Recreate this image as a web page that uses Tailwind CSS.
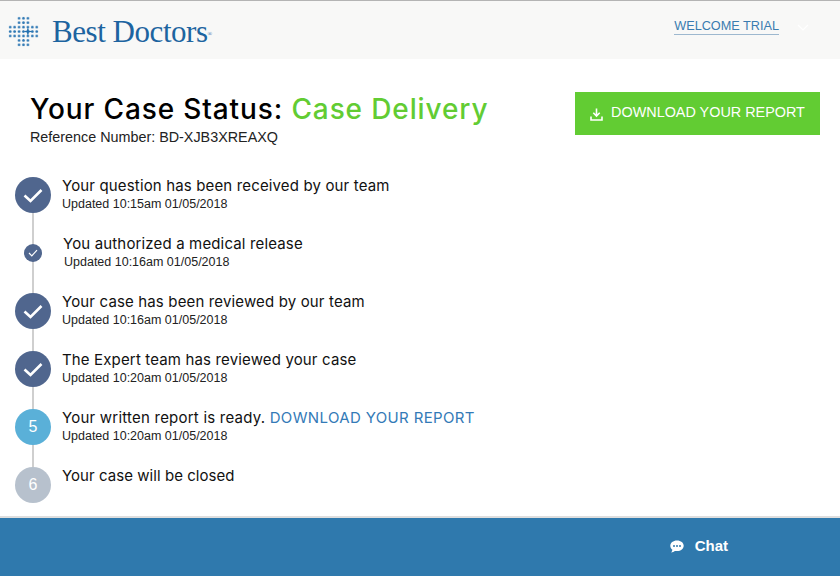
<!DOCTYPE html>
<html>
<head>
<meta charset="utf-8">
<script src="https://cdn.jsdelivr.net/npm/@tailwindcss/browser@4"></script>
</head>
<body class="w-[840px] h-[576px] overflow-hidden bg-white font-['Liberation_Sans',sans-serif] flex flex-col">
<header class="h-[59px] shrink-0 border-t border-[#b4b4b4] bg-[#f8f8f7] flex items-center justify-between">
  <div class="flex items-center pl-2">
    <svg width="31" height="31" viewBox="0 0 31 31" class="mt-[2px]">
      <defs><pattern id="d" width="4.43" height="4.43" patternUnits="userSpaceOnUse" x="0" y="0"><circle cx="2.2" cy="2.2" r="1.35" fill="#2f78b4"/></pattern></defs>
      <polygon points="8.86,0 22.14,0 22.14,8.86 31,8.86 31,22.14 22.14,22.14 22.14,31 8.86,31 8.86,22.14 0,22.14 0,8.86 8.86,8.86" fill="url(#d)"/>
      <circle cx="19.9" cy="15.5" r="3.2" fill="#f8f8f7"/>
      <path d="M19.9 10.5 L20.9 14.5 L24.900 15.5 L20.9 16.5 L19.9 20.500 L18.9 16.5 L14.900 15.5 L18.900 14.5 Z" fill="#2471b0"/>
    </svg>
    <span class="ml-[13px] mt-[2px] font-['Liberation_Serif',serif] text-[31px] leading-none tracking-[-0.45px] text-[#1d64a0]">Best Doctors<span class="text-[6px] align-[6px] leading-none">®</span></span>
  </div>
  <div class="flex items-center pr-[31px] mb-[7px]">
    <a class="text-[12.7px] leading-[15px] text-[#3a7cb0] border-b border-[#9db8cf]">WELCOME TRIAL</a>
    <svg width="12" height="8" viewBox="0 0 12 8" class="ml-[18px] mt-[3px]" fill="none" stroke="#fff" stroke-width="1.2"><path d="M1 1l5 5 5-5"/></svg>
  </div>
</header>
<main class="flex-1 min-h-0">
  <div class="flex justify-between pl-[30px] pr-5 pt-[33px]">
    <div>
      <h1 class="font-['Inter',sans-serif] font-medium text-[28px] leading-[34px] tracking-[0.88px] text-black">Your Case Status: <span class="text-[#62cc33]">Case Delivery</span></h1>
      <p class="text-[14.35px] leading-[20px] mt-[1px] text-[#222]">Reference Number: BD-XJB3XREAXQ</p>
    </div>
    <button class="w-[245px] h-[43px] bg-[#62cc33] text-white text-[14.4px] flex items-center justify-center gap-[8px] pb-[1px]">
      <svg width="13" height="13" viewBox="0 0 13 13" fill="none" stroke="#fff" stroke-width="1.6" class="mt-[2px]"><path d="M6.5 0.5v7M3.3 4.8l3.2 3.2 3.2-3.2"/><path d="M1 8.5v3.5h11V8.5"/></svg>
      DOWNLOAD YOUR REPORT
    </button>
  </div>
  <ol class="relative mt-[30px] pl-[15px] font-['Inter',sans-serif]">
    <div class="absolute left-[32px] top-[18px] w-[2px] h-[290px] bg-[#cfcfcf]"></div>
    <li class="relative h-[58px] flex items-start gap-[11px]">
      <div class="w-9 h-9 shrink-0 rounded-full bg-[#50668e] flex items-center justify-center"><svg width="20" height="15" viewBox="0 0 20 15" fill="none" stroke="#fff" stroke-width="2.6"><path d="M1.5 7.5l6 5.5L18.5 2"/></svg></div>
      <div><p class="text-[15px] leading-[18px] tracking-[0.15px] text-[#111]">Your question has been received by our team</p><p class="font-['Liberation_Sans',sans-serif] text-[12.5px] leading-[18px] text-[#222]">Updated 10:15am 01/05/2018</p></div>
    </li>
    <li class="relative h-[58px] flex items-start pl-[9px] gap-[21px]">
      <div class="w-[18px] h-[18px] shrink-0 mt-[9px] rounded-full bg-[#50668e] flex items-center justify-center"><svg width="10" height="8" viewBox="0 0 10 8" fill="none" stroke="#fff" stroke-width="1.2"><path d="M1 4l2.8 2.8L9 1.2"/></svg></div>
      <div><p class="text-[15px] leading-[18px] tracking-[0.15px] text-[#111]">You authorized a medical release</p><p class="font-['Liberation_Sans',sans-serif] text-[12.5px] leading-[18px] text-[#222] pl-[1px]">Updated 10:16am 01/05/2018</p></div>
    </li>
    <li class="relative h-[58px] flex items-start gap-[11px]">
      <div class="w-9 h-9 shrink-0 rounded-full bg-[#50668e] flex items-center justify-center"><svg width="20" height="15" viewBox="0 0 20 15" fill="none" stroke="#fff" stroke-width="2.6"><path d="M1.5 7.5l6 5.5L18.5 2"/></svg></div>
      <div><p class="text-[15px] leading-[18px] tracking-[0.15px] text-[#111]">Your case has been reviewed by our team</p><p class="font-['Liberation_Sans',sans-serif] text-[12.5px] leading-[18px] text-[#222]">Updated 10:16am 01/05/2018</p></div>
    </li>
    <li class="relative h-[58px] flex items-start gap-[11px]">
      <div class="w-9 h-9 shrink-0 rounded-full bg-[#50668e] flex items-center justify-center"><svg width="20" height="15" viewBox="0 0 20 15" fill="none" stroke="#fff" stroke-width="2.6"><path d="M1.5 7.5l6 5.5L18.5 2"/></svg></div>
      <div><p class="text-[15px] leading-[18px] tracking-[0.15px] text-[#111]">The Expert team has reviewed your case</p><p class="font-['Liberation_Sans',sans-serif] text-[12.5px] leading-[18px] text-[#222]">Updated 10:20am 01/05/2018</p></div>
    </li>
    <li class="relative h-[58px] flex items-start gap-[11px]">
      <div class="w-9 h-9 shrink-0 rounded-full bg-[#5ab0d8] flex items-center justify-center font-['Liberation_Sans',sans-serif] text-white text-[16px]">5</div>
      <div><p class="text-[15px] leading-[18px] tracking-[0.22px] text-[#111]">Your written report is ready. <a class="text-[#337ab7] tracking-[0.36px]">DOWNLOAD YOUR REPORT</a></p><p class="font-['Liberation_Sans',sans-serif] text-[12.5px] leading-[18px] text-[#222]">Updated 10:20am 01/05/2018</p></div>
    </li>
    <li class="relative h-[58px] flex items-start gap-[11px]">
      <div class="w-9 h-9 shrink-0 rounded-full bg-[#b7c1cd] flex items-center justify-center font-['Liberation_Sans',sans-serif] text-white text-[16px]">6</div>
      <div><p class="text-[15px] leading-[18px] tracking-[0.05px] text-[#111]">Your case will be closed</p></div>
    </li>
  </ol>
</main>
<footer class="h-[60px] shrink-0 border-t-2 border-[#dedede] bg-[#2f79ad] flex items-center justify-end pr-[112px] pb-[2px] gap-[11px] text-white">
  <svg width="14" height="13" viewBox="0 0 14 13"><path d="M7 0.5C3.1 0.5 0.3 2.8 0.3 5.8c0 1.6.8 3 2.1 4-.1 1-.6 1.9-1.3 2.6 1.500-.1 2.8-.7 3.8-1.5.7.1 1.4.2 2.1.2 3.9 0 6.7-2.3 6.7-5.3S10.900.5 7 .5z" fill="#fff"/><circle cx="4" cy="5.900" r="1" fill="#2f79ad"/><circle cx="7" cy="5.900" r="1" fill="#2f79ad"/><circle cx="10" cy="5.900" r="1" fill="#2f79ad"/></svg>
  <span class="font-bold text-[15px] leading-none mb-[2px]">Chat</span>
</footer>
</body>
</html>
